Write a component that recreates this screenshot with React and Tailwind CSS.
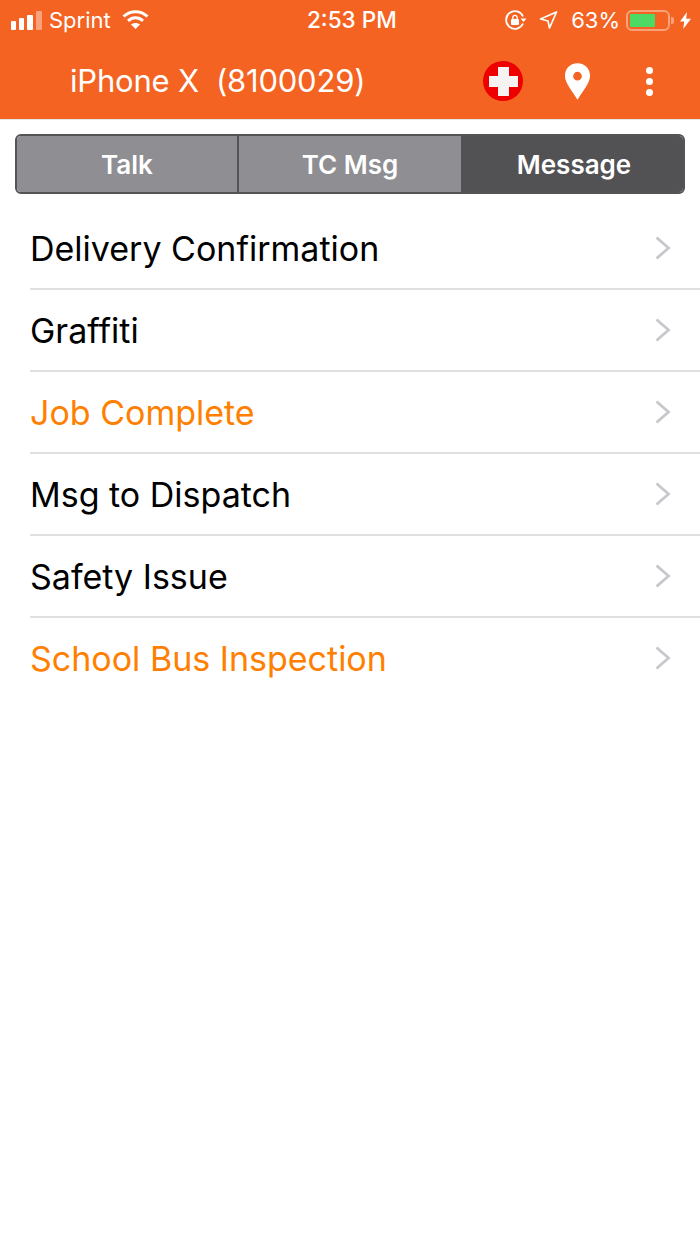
const ROWS = [
  { label: 'Delivery Confirmation' },
  { label: 'Graffiti' },
  { label: 'Job Complete', orange: true },
  { label: 'Msg to Dispatch' },
  { label: 'Safety Issue' },
  { label: 'School Bus Inspection', orange: true },
];

function StatusBar() {
  return (
    <div className="h-[40px] flex items-center text-white relative">
      <div className="flex items-end gap-[3px] ml-[11px] h-[19px]">
        <span className="w-[5px] h-[9px] rounded-[1px] bg-white" />
        <span className="w-[5px] h-[12px] rounded-[1px] bg-white" />
        <span className="w-[6px] h-[15px] rounded-[1px] bg-white" />
        <span className="w-[6px] h-[19px] rounded-[1px] bg-white/40" />
      </div>
      <span className="ml-[7px] text-[22px]">Sprint</span>
      <svg className="ml-[11px] mb-[2px]" width="27" height="20" viewBox="0 0 27 20" fill="none" stroke="white" strokeWidth="3">
        <path d="M1.5 7.5C8.5 1 18.5 1 25.5 7.5" />
        <path d="M6 11.8C10.5 7.8 16.5 7.8 21 11.8" />
        <path d="M13.5 20l-4.5-4.5c2.5-2 6.5-2 9 0z" fill="white" stroke="none" />
      </svg>
      <span className="absolute left-[307px] text-[22.5px] font-medium">2:53 PM</span>
      <div className="ml-auto flex items-center">
        <svg width="22" height="20" viewBox="0 0 22 20" fill="none" stroke="white" strokeWidth="1.8">
          <path d="M18 6.5A8.8 8.8 0 1 0 18 13.5" />
          <path d="M15.5 8.5h6l-3 3.5z" fill="white" stroke="none" />
          <rect x="6" y="9" width="8" height="6" rx="1" fill="white" stroke="none" />
          <path d="M7.8 9V7.5a2.2 2.2 0 0 1 4.4 0V9" strokeWidth="1.3" />
        </svg>
        <svg className="ml-[12px]" width="19" height="18" viewBox="0 0 19 18" fill="none" stroke="white" strokeWidth="1.7" strokeLinejoin="round">
          <path d="M17.5 1L1.5 8 9 10 10.5 17z" />
        </svg>
        <span className="ml-[13px] text-[22px]">63%</span>
        <div className="ml-[6px] w-[44px] h-[21px] rounded-[6px] border-2 border-white/40 p-[2px]">
          <div className="w-[25px] h-full rounded-[1px] bg-[#4cd964]" />
        </div>
        <span className="w-[3px] h-[7px] bg-white/40 ml-[1px] rounded-r-[2px]" />
        <svg className="ml-[6px] mr-[9px]" width="11" height="17" viewBox="0 0 11 17" fill="white">
          <path d="M7 0L0 9.5h4.2L3.2 17 11 6.8H6.2z" />
        </svg>
      </div>
    </div>
  );
}

function NavBar() {
  return (
    <div className="flex items-center h-[79px] pt-[3px] text-white">
      <span className="ml-[70px] text-[31px] tracking-[-0.2px] whitespace-pre">iPhone X  (8100029)</span>
      <div className="ml-auto flex items-center">
        <div className="w-[40px] h-[40px] rounded-full bg-[#ee0000] flex items-center justify-center relative">
          <span className="absolute w-[29px] h-[11px] bg-[#f6f3f3]" />
          <span className="absolute w-[11px] h-[29px] bg-[#f6f3f3]" />
        </div>
        <svg className="ml-[41px]" width="27" height="37" viewBox="0 0 28 38">
          <path fillRule="evenodd" fill="white" d="M14 0C6 0 1 6 1 13c0 8 8 16 13 25 5-9 13-17 13-25C27 6 22 0 14 0zm0 9a4.5 4.5 0 1 1 0 9 4.5 4.5 0 0 1 0-9z" />
        </svg>
        <div className="ml-[55px] mr-[47px] flex flex-col gap-[4px]">
          <span className="w-[7px] h-[7px] rounded-full bg-white" />
          <span className="w-[7px] h-[7px] rounded-full bg-white" />
          <span className="w-[7px] h-[7px] rounded-full bg-white" />
        </div>
      </div>
    </div>
  );
}

function Tabs() {
  return (
    <div className="mx-[15px] mt-[14px] h-[60px] flex rounded-[6px] border-2 border-[#545456] overflow-hidden text-white text-[26px] font-semibold">
      <div className="w-[222px] bg-[#8e8e93] flex items-center justify-center border-r-2 border-[#545456]">Talk</div>
      <div className="w-[222px] bg-[#8e8e93] flex items-center justify-center">TC Msg</div>
      <div className="flex-1 pl-[4px] bg-[#525254] flex items-center justify-center">Message</div>
    </div>
  );
}

export default function App() {
  return (
    <div className="w-[700px] h-[1244px] bg-white overflow-hidden font-['Inter',sans-serif]">
      {/* Orange header */}
      <div className="bg-[#f46322] border-b border-[#dfe6e6]">
        <StatusBar />
        <NavBar />
      </div>

      <Tabs />

      {/* Message types */}
      <div className="mt-[14px] pl-[30px]">
        {ROWS.map((row, i) => (
          <div
            key={row.label}
            className={`h-[82px] flex items-center justify-between pr-[29px] border-b-2 ${i < ROWS.length - 1 ? 'border-[#e0e0e2]' : 'border-transparent'}`}
          >
            <span className={`text-[34px] ${row.orange ? 'text-[#ff8000]' : 'text-black'}`}>{row.label}</span>
            <svg width="16" height="24" viewBox="0 0 16 24" fill="none" stroke="#c7c7cc" strokeWidth="2.8">
              <path d="M1.5 1.5L13.5 12 1.5 22.5" />
            </svg>
          </div>
        ))}
      </div>
    </div>
  );
}
